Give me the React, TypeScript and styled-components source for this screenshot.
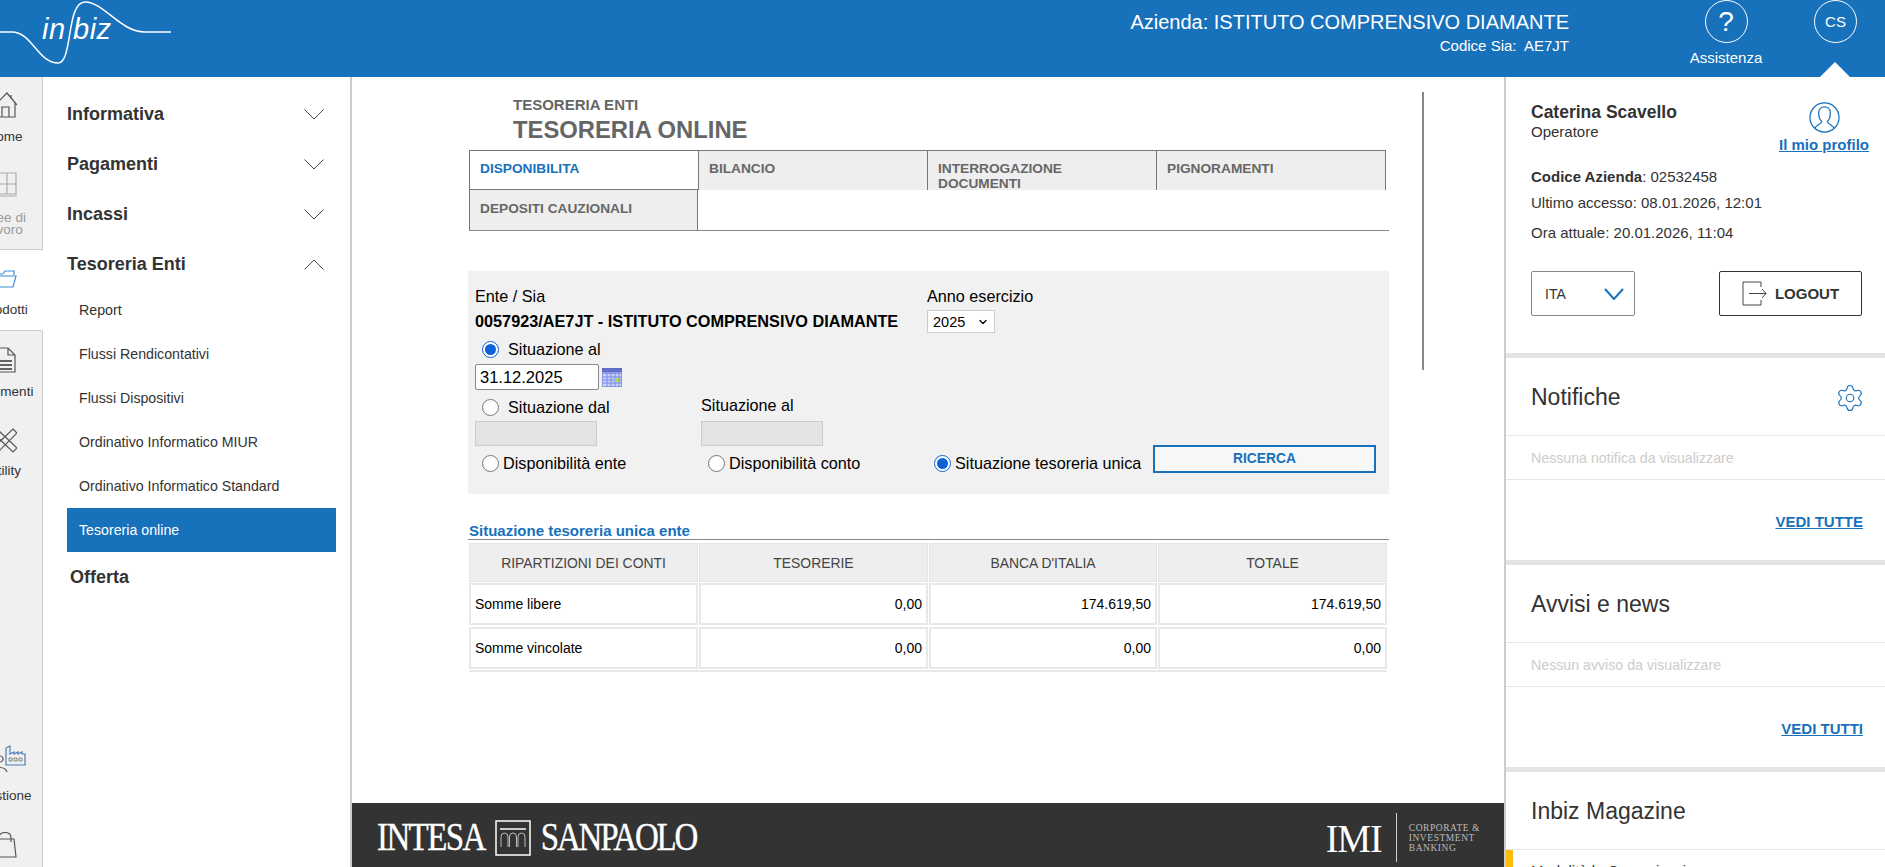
import React from "react";
import styled, { createGlobalStyle } from "styled-components";
import { ChevronDown, Settings } from "lucide-react";

const blue = "#1771bb";

const GlobalStyle = createGlobalStyle`
  html, body {
    margin: 0;
    padding: 0;
    height: 867px;
    overflow: hidden;
    background: #fff;
    font-family: "Liberation Sans", Arial, sans-serif;
  }
  * { box-sizing: border-box; }
`;

const Page = styled.div`
  width: 1885px;
  height: 867px;
  display: flex;
  flex-direction: column;
  overflow: hidden;
`;

const Header = styled.header`
  background: ${blue};
  height: 77px;
  flex: none;
  display: flex;
  align-items: flex-start;
  color: #fff;
`;

const Logo = styled.div`
  position: relative;
  width: 172px;
  height: 77px;
  flex: none;
`;

const LogoWave = styled.svg`
  position: absolute;
  left: 0;
  top: 0;
`;

const LogoText = styled.span<{ $left: number }>`
  position: absolute;
  font-style: italic;
  font-size: 29px;
  top: 13px;
  letter-spacing: 0.5px;
  left: ${(p) => p.$left}px;
`;

const Company = styled.div`
  margin-left: auto;
  padding-top: 11px;
  text-align: right;
`;

const CompanyName = styled.div`
  font-size: 20px;
  line-height: 23px;
`;

const CompanyCode = styled.div`
  font-size: 15px;
  line-height: 17px;
  margin-top: 3px;
`;

const HelpBox = styled.div`
  width: 90px;
  margin-left: 112px;
  display: flex;
  flex-direction: column;
  align-items: center;
  font-size: 15px;
  margin-top: 0;
`;

const Circle = styled.div<{ $size: number }>`
  width: 43px;
  height: 43px;
  border: 1px solid #fff;
  border-radius: 50%;
  display: flex;
  align-items: center;
  justify-content: center;
  margin-bottom: 6px;
  font-size: ${(p) => p.$size}px;
`;

const UserBox = styled.div`
  position: relative;
  width: 43px;
  margin: 0 28px 0 43px;
  height: 77px;
`;

const Notch = styled.div`
  position: absolute;
  left: 6px;
  bottom: 0;
  width: 0;
  height: 0;
  border-left: 15px solid transparent;
  border-right: 15px solid transparent;
  border-bottom: 15px solid #fff;
`;

const Body = styled.div`
  flex: 1;
  display: flex;
  min-height: 0;
`;

const Rail = styled.nav`
  width: 43px;
  flex: none;
  overflow: hidden;
  background: #f0f0f0;
`;

const RailInner = styled.div`
  width: 76px;
  margin-left: -33px;
`;

const RailItem = styled.div<{ $h: number; $active?: boolean; $muted?: boolean; $line?: boolean }>`
  height: ${(p) => p.$h}px;
  display: flex;
  flex-direction: column;
  align-items: center;
  font-size: 13.5px;
  line-height: 12px;
  text-align: center;
  color: ${(p) => (p.$muted ? "#999" : "#333")};
  background: ${(p) => (p.$active ? "#fff" : "transparent")};
  border-right: ${(p) => (p.$active ? "1px solid #fff" : "1px solid #ccc")};
  border-bottom: ${(p) => (p.$line ? "1px solid #ccc" : "none")};
`;

const RailIcon = styled.svg<{ $top: number; $gap: number }>`
  display: block;
  flex: none;
  margin-top: ${(p) => p.$top}px;
  margin-bottom: ${(p) => p.$gap}px;
  margin-left: -3px;
  fill: none;
  stroke-width: 1.2;
`;

const Menu = styled.aside`
  width: 309px;
  flex: none;
  border-right: 2px solid #ccc;
  padding: 12px 14px 0 24px;
`;

const MenuHead = styled.div<{ $shift?: number }>`
  height: 50px;
  display: flex;
  align-items: center;
  justify-content: space-between;
  font-size: 18px;
  font-weight: bold;
  color: #333;
  padding: 0 7px 0 ${(p) => p.$shift ?? 0}px;
`;

const Chevron = styled.svg`
  margin-right: 5px;
  fill: none;
  stroke: #445;
  stroke-width: 1;
`;

const SubList = styled.div`
  margin-top: -1px;
`;

const SubItem = styled.div<{ $active?: boolean }>`
  height: 44px;
  line-height: 45px;
  padding-left: 12px;
  font-size: 14.2px;
  color: ${(p) => (p.$active ? "#fff" : "#333")};
  background: ${(p) => (p.$active ? blue : "transparent")};
`;

const Main = styled.main`
  flex: 1;
  min-width: 0;
  display: flex;
  flex-direction: column;
`;

const Content = styled.div`
  flex: 1;
  position: relative;
  padding: 19px 0 0 117px;
`;

const ScrollLine = styled.div`
  position: absolute;
  left: 1070px;
  top: 15px;
  width: 2px;
  height: 278px;
  background: #888;
`;

const Crumb = styled.div`
  padding-left: 44px;
  font-size: 15px;
  line-height: 18px;
  font-weight: bold;
  color: #666;
`;

const Title = styled.h1`
  margin: 1px 0 0;
  padding-left: 44px;
  font-size: 23.8px;
  line-height: 30px;
  font-weight: bold;
  color: #666;
`;

const Tabs = styled.div`
  margin-top: 5px;
  width: 920px;
  height: 81px;
  display: grid;
  grid-template-columns: 229px 229px 229px 230px;
  grid-auto-rows: 40px;
  border-bottom: 1px solid #888;
  align-content: start;
`;

const Tab = styled.div<{ $active?: boolean; $cut?: boolean }>`
  background: ${(p) => (p.$active ? "#fff" : "#eee")};
  color: ${(p) => (p.$active ? blue : "#666")};
  border-top: 1px solid #777;
  border-left: 1px solid #777;
  border-right: ${(p) => (p.$cut ? "1px solid #777" : "none")};
  border-bottom: ${(p) => (p.$active ? "1px solid #777" : "none")};
  padding: 10px 40px 0 10px;
  font-size: 13.7px;
  line-height: 15px;
  font-weight: bold;
  overflow: hidden;
`;

const LastTab = styled(Tab)`
  border-top: none;
  border-right: 1px solid #777;
  padding: 11px 10px 0;
`;

const Form = styled.section`
  margin-top: 40px;
  margin-left: -1px;
  width: 921px;
  height: 223px;
  background: #f1f1f1;
  padding: 16px 7px 0;
  font-size: 16.2px;
  color: #000;
`;

const FormRow = styled.div`
  display: flex;
`;

const ColA = styled.div`
  width: 452px;
`;

const Label = styled.div`
  line-height: 19px;
`;

const Strong = styled.div`
  margin-top: 5px;
  font-size: 16.25px;
  font-weight: bold;
  line-height: 20px;
`;

const YearSelect = styled.div`
  margin-top: 4px;
  width: 68px;
  height: 23px;
  background: #fff;
  border: 1px solid #ccc;
  font-size: 14.5px;
  display: flex;
  align-items: center;
  justify-content: space-between;
  padding: 0 5px;
`;

const RadioLine = styled.div<{ $top?: number }>`
  display: flex;
  align-items: center;
  height: 20px;
  margin-top: ${(p) => p.$top ?? 0}px;
  padding-left: 7px;
  gap: 9px;
  line-height: 20px;
`;

const Radio = styled.span<{ $on?: boolean }>`
  flex: none;
  width: 17px;
  height: 17px;
  border-radius: 50%;
  background: #fff;
  border: 1px solid ${(p) => (p.$on ? "#0f62d6" : "#767676")};
  display: flex;
  align-items: center;
  justify-content: center;
  &::after {
    content: "";
    display: ${(p) => (p.$on ? "block" : "none")};
    width: 11px;
    height: 11px;
    border-radius: 50%;
    background: #0f62d6;
  }
`;

const DateRow = styled.div`
  display: flex;
  align-items: center;
  gap: 3px;
  margin-top: 5px;
`;

const DateInput = styled.div<{ $off?: boolean }>`
  height: ${(p) => (p.$off ? "25px" : "26px")};
  width: ${(p) => (p.$off ? "122px" : "124px")};
  border: 1px solid ${(p) => (p.$off ? "#ccc" : "#888")};
  border-radius: ${(p) => (p.$off ? "0" : "2px")};
  background: ${(p) => (p.$off ? "#e3e3e3" : "#fff")};
  padding-left: 4px;
  font-size: 16.5px;
  line-height: 25px;
`;

const RangeRow = styled.div`
  display: flex;
  margin-top: 7px;
`;

const RangeCol = styled.div`
  width: 226px;
`;

const RangeLabel = styled.div`
  height: 20px;
  line-height: 20px;
  margin-top: -2px;
  margin-bottom: 6px;
`;

const RangeGap = styled.div`
  height: 4px;
`;

const BottomRow = styled.div`
  display: flex;
  align-items: center;
  margin-top: 4px;
  height: 27px;
`;

const Choice = styled.div`
  width: 226px;
  display: flex;
  align-items: center;
  gap: 4px;
  padding-left: 7px;
  white-space: nowrap;
`;

const SearchButton = styled.div`
  width: 223px;
  height: 28px;
  margin-top: -10px;
  border: 2px solid ${blue};
  background: #f7f7f7;
  color: ${blue};
  font-size: 13.8px;
  font-weight: bold;
  display: flex;
  align-items: center;
  justify-content: center;
`;

const TableTitle = styled.div`
  margin-top: 29px;
  margin-left: -1px;
  padding-left: 1px;
  width: 921px;
  height: 17px;
  line-height: 15px;
  font-size: 15px;
  font-weight: bold;
  color: ${blue};
  border-bottom: 1px solid #888;
`;

const DataTable = styled.div`
  margin-top: 3px;
  width: 918px;
  display: grid;
  grid-template-columns: 229px 229px 228px 229px;
  grid-template-rows: 40px 44px 43px;
  column-gap: 1px;
  border-bottom: 2px solid #e8e8e8;
`;

const HeadCell = styled.div`
  height: 39px;
  background: #eee;
  border: 1px solid #e4e4e4;
  color: #444;
  font-size: 13.9px;
  display: flex;
  align-items: center;
  justify-content: center;
`;

const Cell = styled.div<{ $num?: boolean }>`
  height: 42px;
  border: 2px solid #e8e8e8;
  background: #fff;
  color: #000;
  font-size: 14px;
  display: flex;
  align-items: center;
  padding: 0 4px;
  justify-content: ${(p) => (p.$num ? "flex-end" : "flex-start")};
`;

const Footer = styled.footer`
  height: 64px;
  flex: none;
  background: #333;
  display: flex;
  align-items: center;
  justify-content: space-between;
  padding: 5px 24px 0 25px;
  color: #fff;
  font-family: "Liberation Serif", serif;
`;

const Brand = styled.div`
  display: flex;
  align-items: center;
  gap: 10px;
  font-size: 33px;
`;

const BrandWord = styled.span<{ $track: number }>`
  display: inline-block;
  letter-spacing: ${(p) => p.$track}px;
  transform: scaleY(1.22);
  -webkit-text-stroke: 0.3px #fff;
`;

const Imi = styled.div`
  display: flex;
  align-items: center;
`;

const ImiMark = styled.span`
  display: inline-block;
  font-size: 38px;
  letter-spacing: -1px;
  transform: scaleY(1.08);
`;

const ImiSub = styled.div`
  border-left: 1px solid #ccc;
  margin-left: 14px;
  padding: 10px 0 0 12px;
  height: 49px;
  font-size: 9.5px;
  line-height: 10px;
  letter-spacing: 0.55px;
  color: #bbb;
`;

const Side = styled.aside`
  width: 381px;
  flex: none;
  border-left: 2px solid #ccc;
  display: flex;
  flex-direction: column;
`;

const Profile = styled.div`
  height: 281px;
  flex: none;
  padding: 25px 23px 0 25px;
  font-size: 15px;
  color: #333;
  border-bottom: 5px solid #e3e3e3;
`;

const ProfileTop = styled.div`
  display: flex;
  justify-content: space-between;
  height: 60px;
`;

const UserName = styled.div`
  font-size: 17.5px;
  line-height: 20px;
  font-weight: bold;
`;

const UserRole = styled.div`
  font-size: 15px;
  line-height: 18px;
  margin-top: 1px;
`;

const ProfileLink = styled.div`
  display: flex;
  flex-direction: column;
  align-items: center;
  margin-right: -7px;
  color: ${blue};
  font-size: 15px;
  line-height: 16px;
  font-weight: bold;
  text-decoration: underline;
  gap: 4px;
`;

const Info = styled.div<{ $h: number }>`
  line-height: 30px;
  height: ${(p) => p.$h}px;
`;

const ProfileActions = styled.div`
  display: flex;
  justify-content: space-between;
  margin-top: 23px;
`;

const LangSelect = styled.div`
  width: 104px;
  height: 45px;
  border: 1px solid #888;
  border-radius: 2px;
  padding: 0 10px 0 13px;
  display: flex;
  align-items: center;
  justify-content: space-between;
  font-size: 14px;
`;

const LangChevron = styled.svg`
  fill: none;
  stroke: ${blue};
  stroke-width: 2;
`;

const Logout = styled.div`
  width: 143px;
  height: 45px;
  border: 1px solid #333;
  border-radius: 2px;
  display: flex;
  align-items: center;
  justify-content: center;
  gap: 8px;
  font-size: 15px;
  font-weight: bold;
`;

const Panel = styled.section`
  height: 207px;
  flex: none;
  border-bottom: 5px solid #e3e3e3;
  display: flex;
  flex-direction: column;
`;

const PanelHead = styled.div`
  height: 78px;
  flex: none;
  padding: 2px 22px 0 25px;
  display: flex;
  align-items: center;
  justify-content: space-between;
  font-size: 23px;
  color: #333;
  border-bottom: 1px solid #e6e6e6;
`;

const GearIcon = styled(Settings)`
  margin-right: -2px;
`;

const PanelEmpty = styled.div`
  height: 44px;
  flex: none;
  line-height: 44px;
  padding-left: 25px;
  font-size: 14.2px;
  color: #ccc;
  border-bottom: 1px solid #e6e6e6;
`;

const PanelLink = styled.div`
  flex: 1;
  display: flex;
  align-items: center;
  justify-content: flex-end;
  padding: 3px 22px 0 0;
  color: ${blue};
  font-size: 15px;
  font-weight: bold;
  text-decoration: underline;
`;

const Magazine = styled.section`
  flex: 1;
  min-height: 0;
  overflow: hidden;
  display: flex;
  flex-direction: column;
`;

const MagazineItem = styled.div`
  border-left: 7px solid #fdbb0b;
  padding: 12px 0 0 18px;
  font-size: 15px;
  line-height: 17px;
  color: #333;
  height: 40px;
  flex: none;
`;

const tabs = ["DISPONIBILITA", "BILANCIO", "INTERROGAZIONE DOCUMENTI", "PIGNORAMENTI"];
const rows = [
  ["Somme libere", "0,00", "174.619,50", "174.619,50"],
  ["Somme vincolate", "0,00", "0,00", "0,00"],
];

const Down = () => (
  <Chevron width="20" height="11" viewBox="0 0 20 11">
    <path d="M0.5 0.5 L10 10 L19.5 0.5" />
  </Chevron>
);

const Up = () => (
  <Chevron width="20" height="11" viewBox="0 0 20 11">
    <path d="M0.5 10.5 L10 1 L19.5 10.5" />
  </Chevron>
);

function App() {
  return (
    <Page>
      <GlobalStyle />
      <Header>
        <Logo>
          <LogoWave width="172" height="77" viewBox="0 0 172 77">
            <path
              d="M0 32 H12 C32 32 38 63 58 63 C73 63 66 2 85 2 C104 2 120 32 145 32 H171"
              fill="none"
              stroke="#fff"
              strokeWidth="1.5"
            />
          </LogoWave>
          <LogoText $left={42}>in</LogoText>
          <LogoText $left={73}>biz</LogoText>
        </Logo>
        <Company>
          <CompanyName>Azienda: ISTITUTO COMPRENSIVO DIAMANTE</CompanyName>
          <CompanyCode>Codice Sia:&nbsp; AE7JT</CompanyCode>
        </Company>
        <HelpBox>
          <Circle $size={28}>?</Circle>
          Assistenza
        </HelpBox>
        <UserBox>
          <Circle $size={15}>CS</Circle>
          <Notch />
        </UserBox>
      </Header>
      <Body>
        <Rail>
          <RailInner>
            <RailItem $h={87}>
              <RailIcon $top={15} $gap={13} width="28" height="26" viewBox="0 0 28 26" stroke="#555">
                <path d="M6 13 L18 1 L28 13 M10 10 V25 H26 V10 M13 25 V15 H20 V25 M22 3 V7" />
              </RailIcon>
              Home
            </RailItem>
            <RailItem $h={86} $muted $line>
              <RailIcon $top={8} $gap={15} width="28" height="25" viewBox="0 0 28 25" stroke="#aaa">
                <path d="M9 1 H27 V22 H9 Z M18 1 V22 M9 12 H27 M7 24 H28" />
              </RailIcon>
              Aree di
              <br />
              lavoro
            </RailItem>
            <RailItem $h={81} $active $line>
              <RailIcon $top={20} $gap={16} width="28" height="18" viewBox="0 0 28 18" stroke="#3a8fd8">
                <path d="M2 4 H14 L16 1 H25 V5 M1 6 H27 L24 17 H1 Z" />
              </RailIcon>
              Prodotti
            </RailItem>
            <RailItem $h={79}>
              <RailIcon $top={16} $gap={13} width="28" height="26" viewBox="0 0 28 26" stroke="#555">
                <path d="M6 1 H19 L26 8 V25 H6 Z M19 1 V8 H26" />
                <path d="M9 14 H23 M9 18 H23 M9 22 H23" stroke="#333" strokeWidth="1.5" />
              </RailIcon>
              Strumenti
            </RailItem>
            <RailItem $h={320}>
              <RailIcon $top={18} $gap={11} width="28" height="26" viewBox="0 0 28 26" stroke="#555">
                <path d="M4 5 L8 1 L28 20 L24 24 Z" />
                <path d="M24 1 L28 5 L9 24 L3 26 L5 19 Z" />
              </RailIcon>
              Utility
            </RailItem>
            <RailItem $h={90}>
              <RailIcon $top={15} $gap={18} width="50" height="27" viewBox="0 0 50 27" stroke="#555">
                <path d="M14 27 C16 21 27 21 29 27 M22 11 a3 3 0 1 0 .1 0" />
                <path d="M28 20 V3 L32 1 V9 L36 7 V9 L40 7 V9 L44 7 V9 H47 V20 Z" stroke="#4a7fb5" />
                <path d="M31 13 h3 v3 h-3 z M36 13 h3 v3 h-3 z M41 13 h3 v3 h-3 z" stroke="#777" strokeWidth="0.9" />
              </RailIcon>
              Gestione
            </RailItem>
            <RailItem $h={47}>
              <RailIcon $top={12} $gap={0} width="28" height="26" viewBox="0 0 28 26" stroke="#555">
                <path d="M5 7 H25 L27 25 H3 Z M10 10 V5 a6 4.5 0 0 1 12 0 V10" />
              </RailIcon>
            </RailItem>
          </RailInner>
        </Rail>
        <Menu>
          {["Informativa", "Pagamenti", "Incassi"].map((m) => (
            <MenuHead key={m}>
              {m}
              <Down />
            </MenuHead>
          ))}
          <MenuHead>
            Tesoreria Enti
            <Up />
          </MenuHead>
          <SubList>
            <SubItem>Report</SubItem>
            <SubItem>Flussi Rendicontativi</SubItem>
            <SubItem>Flussi Dispositivi</SubItem>
            <SubItem>Ordinativo Informatico MIUR</SubItem>
            <SubItem>Ordinativo Informatico Standard</SubItem>
            <SubItem $active>Tesoreria online</SubItem>
          </SubList>
          <MenuHead $shift={3}>Offerta</MenuHead>
        </Menu>
        <Main>
          <Content>
            <ScrollLine />
            <Crumb>TESORERIA ENTI</Crumb>
            <Title>TESORERIA ONLINE</Title>
            <Tabs>
              {tabs.map((t, i) => (
                <Tab key={t} $active={i === 0} $cut={i === 3}>
                  {t}
                </Tab>
              ))}
              <LastTab>DEPOSITI CAUZIONALI</LastTab>
            </Tabs>
            <Form>
              <FormRow>
                <ColA>
                  <Label>Ente / Sia</Label>
                  <Strong>0057923/AE7JT - ISTITUTO COMPRENSIVO DIAMANTE</Strong>
                </ColA>
                <div>
                  <Label>Anno esercizio</Label>
                  <YearSelect>
                    2025
                    <ChevronDown size={12} strokeWidth={2.5} />
                  </YearSelect>
                </div>
              </FormRow>
              <RadioLine $top={6}>
                <Radio $on />
                Situazione al
              </RadioLine>
              <DateRow>
                <DateInput>31.12.2025</DateInput>
                <svg width="20" height="19" viewBox="0 0 20 19">
                  <rect width="20" height="19" fill="#8f9be8" />
                  <rect y="0" width="20" height="4" fill="#5f6fc8" />
                  <path d="M1 6 H19 V18 H1 Z" fill="#c9d1fb" />
                  <path d="M5 5 V19 M9 5 V19 M13 5 V19 M17 5 V19 M0 9 H20 M0 12 H20 M0 15 H20" stroke="#7d8ae0" />
                  <rect x="13" y="10" width="4" height="4" fill="#9fdc5f" />
                </svg>
              </DateRow>
              <RangeRow>
                <RangeCol>
                  <RadioLine>
                    <Radio />
                    Situazione dal
                  </RadioLine>
                  <RangeGap />
                  <DateInput $off />
                </RangeCol>
                <RangeCol>
                  <RangeLabel>Situazione al</RangeLabel>
                  <DateInput $off />
                </RangeCol>
              </RangeRow>
              <BottomRow>
                <Choice>
                  <Radio />
                  Disponibilità ente
                </Choice>
                <Choice>
                  <Radio />
                  Disponibilità conto
                </Choice>
                <Choice>
                  <Radio $on />
                  Situazione tesoreria unica
                </Choice>
                <SearchButton>RICERCA</SearchButton>
              </BottomRow>
            </Form>
            <TableTitle>Situazione tesoreria unica ente</TableTitle>
            <DataTable>
              <HeadCell>RIPARTIZIONI DEI CONTI</HeadCell>
              <HeadCell>TESORERIE</HeadCell>
              <HeadCell>BANCA D'ITALIA</HeadCell>
              <HeadCell>TOTALE</HeadCell>
              {rows.map((r) =>
                r.map((c, i) => (
                  <Cell key={r[0] + i} $num={i > 0}>
                    {c}
                  </Cell>
                ))
              )}
            </DataTable>
          </Content>
          <Footer>
            <Brand>
              <BrandWord $track={-1.6}>INTESA</BrandWord>
              <svg width="36" height="36" viewBox="0 0 36 36" fill="none" stroke="#fff">
                <rect x="1" y="1" width="34" height="34" strokeWidth="1.5" />
                <path d="M5 9 H31" strokeWidth="1.5" />
                <path d="M6 27 V17 a3.5 4 0 0 1 7 0 V27 M14.5 27 V17 a3.5 4 0 0 1 7 0 V27 M23 27 V17 a3.5 4 0 0 1 7 0 V27" stroke="#bbb" />
              </svg>
              <BrandWord $track={-2.2}>SANPAOLO</BrandWord>
            </Brand>
            <Imi>
              <ImiMark>IMI</ImiMark>
              <ImiSub>
                CORPORATE &amp;
                <br />
                INVESTMENT
                <br />
                BANKING
              </ImiSub>
            </Imi>
          </Footer>
        </Main>
        <Side>
          <Profile>
            <ProfileTop>
              <div>
                <UserName>Caterina Scavello</UserName>
                <UserRole>Operatore</UserRole>
              </div>
              <ProfileLink>
                <svg width="31" height="31" viewBox="0 0 32 32" fill="none" stroke={blue} strokeWidth="1.3">
                  <circle cx="16" cy="16" r="15" />
                  <path d="M6 27 C8 23 13 23 13 20 C10 17 10 14 10 11 C10 7 13 5 16 5 C19 5 22 7 22 11 C22 14 22 17 19 20 C19 23 24 23 26 27" />
                </svg>
                Il mio profilo
              </ProfileLink>
            </ProfileTop>
            <Info $h={26}>
              <b>Codice Azienda</b>: 02532458
            </Info>
            <Info $h={30}>Ultimo accesso: 08.01.2026, 12:01</Info>
            <Info $h={30}>Ora attuale: 20.01.2026, 11:04</Info>
            <ProfileActions>
              <LangSelect>
                ITA
                <LangChevron width="20" height="12" viewBox="0 0 20 12">
                  <path d="M1 1 L10 11 L19 1" />
                </LangChevron>
              </LangSelect>
              <Logout>
                <svg width="25" height="25" viewBox="0 0 25 25" fill="none" stroke="#444" strokeWidth="1">
                  <path d="M19 6 V1 H1 V24 H19 V19 M7 12.5 H24 M20 8 L24 12.5 L20 17" />
                </svg>
                LOGOUT
              </Logout>
            </ProfileActions>
          </Profile>
          <Panel>
            <PanelHead>
              Notifiche
              <GearIcon size={30} strokeWidth={0.9} color={blue} />
            </PanelHead>
            <PanelEmpty>Nessuna notifica da visualizzare</PanelEmpty>
            <PanelLink>VEDI TUTTE</PanelLink>
          </Panel>
          <Panel>
            <PanelHead>Avvisi e news</PanelHead>
            <PanelEmpty>Nessun avviso da visualizzare</PanelEmpty>
            <PanelLink>VEDI TUTTI</PanelLink>
          </Panel>
          <Magazine>
            <PanelHead>Inbiz Magazine</PanelHead>
            <MagazineItem>Modalità la Comunicazione</MagazineItem>
          </Magazine>
        </Side>
      </Body>
    </Page>
  );
}

export default App;
